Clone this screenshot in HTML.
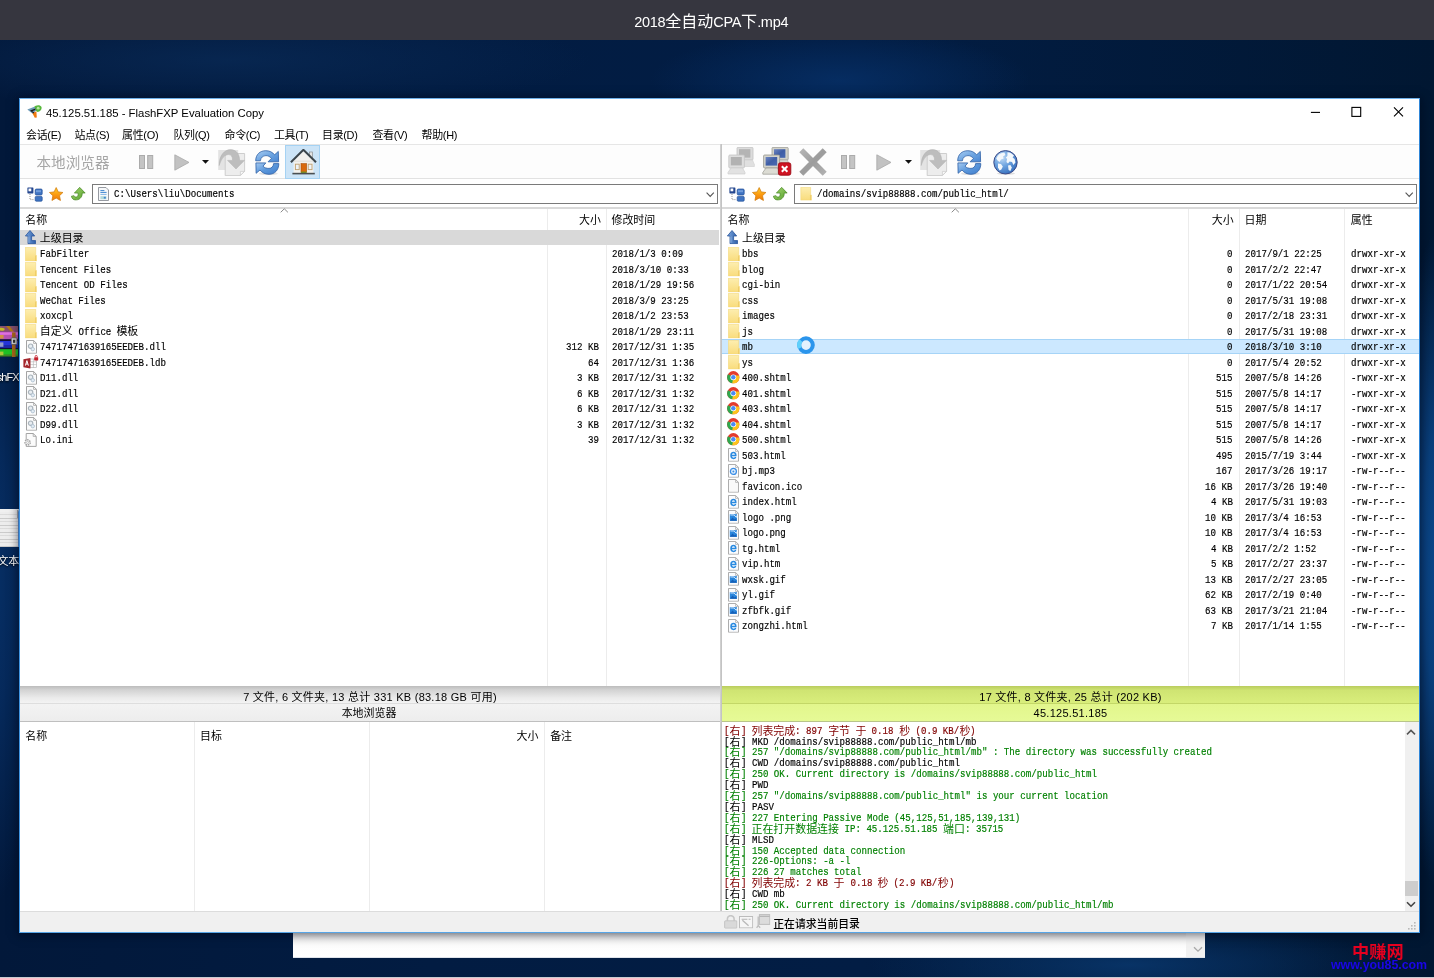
<!DOCTYPE html>
<html lang="zh-CN"><head><meta charset="utf-8"><title>FlashFXP</title>
<style>
html,body{margin:0;padding:0}
body{will-change:transform;width:1434px;height:978px;overflow:hidden;position:relative;background:#03204a;font-family:"Liberation Sans","Noto Sans CJK SC",sans-serif;font-size:11px;color:#000}
div,span,svg{position:absolute;box-sizing:border-box}
span.c,span.n{position:static}
.i{overflow:visible}
#desk{left:0;top:40px;width:1434px;height:938px;background:
 radial-gradient(ellipse 46px 330px at 1440px 520px,#0b4a8e 0%,rgba(10,66,130,.9) 40%,rgba(6,45,96,0) 100%),
 radial-gradient(ellipse 60px 330px at -14px 540px,#07326a 0%,rgba(6,44,96,.85) 45%,rgba(4,34,76,0) 100%),
 radial-gradient(ellipse 360px 50px at 230px 20px,rgba(9,42,86,.75) 0%,rgba(6,36,76,0) 100%),
 radial-gradient(ellipse 190px 50px at 840px 40px,rgba(6,46,100,.9) 0%,rgba(4,36,80,0) 100%),
 radial-gradient(ellipse 260px 44px at 1130px 925px,rgba(8,52,104,.95) 0%,rgba(4,36,80,0) 100%),
 linear-gradient(90deg,#02183a 0%,#021c42 30%,#021d44 60%,#011732 100%)}
#top{left:0;top:0;width:1434px;height:40px;background:#36363f;color:#fff;font-size:16px;line-height:40px;white-space:nowrap;padding-left:634.2px;padding-top:1.5px}
#top span{position:static;font-size:14.5px;letter-spacing:-.3px}
#win{left:19px;top:98px;width:1400.5px;height:834.5px;background:#fff;border:1px solid #3a96dd;border-color:#6fb1ea #2f86d8 #57a5e6 #3f95e2;box-shadow:0 1px 9px 1px rgba(0,5,20,.55)}
.t{white-space:nowrap;line-height:16px;height:16px}
.m,.l{font-family:"Liberation Mono","Noto Sans CJK SC",monospace;font-size:11.5px;white-space:pre;line-height:15.5px;height:15.5px;transform:scaleX(.7935);transform-origin:0 0;-webkit-text-stroke:.2px currentColor}
.mc,.lc{font-family:"Liberation Mono","Noto Sans CJK SC",monospace;font-size:10.95px;white-space:pre;line-height:15.5px;height:15.5px}
.mc,.lc{margin-top:1.1px}
.l{line-height:10.9px;height:10.9px}.lc{line-height:10.9px;height:10.9px}
.h{font-size:10.95px;white-space:nowrap;line-height:16px;height:16px}
.k{color:#000}.g{color:#008000}.d{color:#800000}
.vl{width:1px;background:#ececec}
.st{font-size:11px;letter-spacing:.25px;white-space:nowrap;text-align:center;line-height:16px;height:16px}
</style></head><body>

<svg width="0" height="0" style="position:absolute;left:0;top:0"><defs>
<linearGradient id="gB" x1="0" y1="0" x2="1" y2="1"><stop offset="0" stop-color="#a9cdf2"/><stop offset=".55" stop-color="#6aa2e0"/><stop offset="1" stop-color="#4a86d2"/></linearGradient><linearGradient id="gB2" x1="0" y1="0" x2="1" y2="1"><stop offset="0" stop-color="#a4c9f0"/><stop offset=".5" stop-color="#5c98dc"/><stop offset="1" stop-color="#3f7ccb"/></linearGradient>
<linearGradient id="gS" x1="0" y1="0" x2="0" y2="1"><stop offset="0" stop-color="#ffcf2a"/><stop offset=".55" stop-color="#fb9a10"/><stop offset="1" stop-color="#ee7a08"/></linearGradient>
<linearGradient id="gG" x1="0" y1="0" x2="1" y2="1"><stop offset="0" stop-color="#a6da74"/><stop offset="1" stop-color="#569e2c"/></linearGradient>
<linearGradient id="gF" x1="0" y1="0" x2="0" y2="1"><stop offset="0" stop-color="#fdeeb0"/><stop offset="1" stop-color="#f9dc7c"/></linearGradient>
<linearGradient id="gX" gradientUnits="userSpaceOnUse" x1="0" y1="0" x2="28" y2="28"><stop offset="0" stop-color="#b9b9b9"/><stop offset=".5" stop-color="#9c9c9c"/><stop offset="1" stop-color="#b4b4b4"/></linearGradient>
<linearGradient id="gSc" x1="0" y1="0" x2="1" y2="1"><stop offset="0" stop-color="#6f86c0"/><stop offset=".5" stop-color="#3f5ea6"/><stop offset="1" stop-color="#4a6ab2"/></linearGradient>
<radialGradient id="gGl" cx=".35" cy=".3" r=".8"><stop offset="0" stop-color="#c4ddf6"/><stop offset=".45" stop-color="#6ea4e0"/><stop offset="1" stop-color="#2f68b8"/></radialGradient>
<linearGradient id="gU" x1="0" y1="0" x2="1" y2="0"><stop offset="0" stop-color="#7aa6de"/><stop offset="1" stop-color="#2f5fa8"/></linearGradient>

<symbol id="app" viewBox="0 0 15 13"><path d="M7 2.2C8.5 .2 12.5 -.4 14.2 1.6 15.6 3.6 13.6 6.6 10.6 7L8 5.2Z" fill="#58b83c"/><path d="M.3 4.6L7.4 1.8 9.2 5.4 5.6 8.8Z" fill="#6f9cb8"/><path d="M5.4 8.2L9.4 6.2 9.8 12.6 7.8 12.8Z" fill="#f07a10"/><path d="M3 5.6L8.6 3.4 8.2 5 5.2 6.2 7.4 7.4 6.6 8.6Z" fill="#1a1a1a"/><circle cx="11.2" cy="3.2" r="1.4" fill="#b8e8a0"/></symbol>

<symbol id="xfer" viewBox="0 0 28 27"><rect x=".2" y="1" width="20" height="20" fill="#e3e3e3"/><path d="M7.2 4.5H26.6V22.4L22.4 26.6H7.2Z" fill="#ededed" stroke="#c9c9c9" stroke-width=".9"/><path d="M26.4 22.4H22.4V26.4Z" fill="#fafafa" stroke="#c9c9c9" stroke-width=".7"/><path d="M1.2 16.5C1 6 7 .6 12.4 .6 18.4 .6 21.6 5.4 21.6 11.4H26.4L18 20 9.6 11.4H14.6C14.6 7.6 13.2 5.6 10.6 5.6 6.6 5.6 3.4 9.4 1.2 16.5Z" fill="#bdbdbd" stroke="#b0b0b0" stroke-width=".5"/></symbol>

<symbol id="refr" viewBox="0 0 25 25"><ellipse cx="13.4" cy="23.6" rx="9.4" ry="1.7" fill="#000" opacity=".1"/><path d="M.7 10.8C.7 4.5 5 .7 10.8 .7 14.5 .7 17.5 2.2 19.6 4.8L23.3 1.4 23.6 11.8H13.1L16.4 8.4C15 6.6 13 5.6 11 5.6 8 5.6 5.6 7.6 5.4 10.8Z" fill="url(#gB)" stroke="#2d5fa6" stroke-width=".8" stroke-linejoin="round"/><path d="M23.8 13.6C23.8 20 19.8 24.3 14 24.3 10.2 24.3 7.2 22.8 5 20L1.1 23.3 .9 12.9H10.8L8 16.2C9.4 17.8 11.6 18.4 14 18.4 16.6 18.4 18.4 16.6 18.6 13.6Z" fill="url(#gB2)" stroke="#2d5fa6" stroke-width=".8" stroke-linejoin="round"/></symbol>

<symbol id="home" viewBox="0 0 27 26"><rect x="19.6" y="3" width="3" height="7" fill="#e4e4e4" stroke="#8a8f92" stroke-width=".7"/><path d="M3.6 12L13.4 2.2 23.4 12V24H3.6Z" fill="#f2f1ee"/><path d="M.9 13.2L13.4 .8 26 13.2" fill="none" stroke="#3c454b" stroke-width="2"/><rect x="3.6" y="11.6" width="19.8" height="1.2" fill="#d8d6d0" opacity=".6"/><rect x="11" y="14.6" width="5.6" height="8.8" fill="#d9690e" stroke="#a8500a" stroke-width=".6"/><rect x="5.4" y="15.2" width="3.8" height="5.4" fill="#eef3f8" stroke="#bfa070" stroke-width=".9"/><rect x="18.2" y="15.2" width="3.8" height="5.4" fill="#eef3f8" stroke="#bfa070" stroke-width=".9"/><rect x="11" y="22.6" width="5.6" height="1.2" fill="#6a9a20"/><rect x="2.4" y="23.8" width="22.4" height="1.6" fill="#4a4f52"/></symbol>

<symbol id="pcg" viewBox="0 0 28 28"><rect x="10" y=".4" width="16" height="12.6" rx="1" fill="#dcdcdc" stroke="#c2c2c2" stroke-width=".8"/><rect x="12" y="2.2" width="11.4" height="8.4" fill="#b4b4b4"/><path d="M17 13H25.5L27.4 17.5V19.5H17Z" fill="#e0e0e0" stroke="#cfcfcf" stroke-width=".6"/><rect x="1.8" y="8" width="15.6" height="13" rx="1" fill="#dedede" stroke="#c4c4c4" stroke-width=".8"/><rect x="3.8" y="10" width="11" height="8.4" fill="#b2b2b2"/><path d="M4 21H15.5L18 25.5V27H1V25.5Z" fill="#e2e2e2" stroke="#cdcdcd" stroke-width=".7"/></symbol>

<symbol id="pcb" viewBox="0 0 30 29"><rect x="10" y=".4" width="16.2" height="12.6" rx="1" fill="#d2d2ca" stroke="#9c9c94" stroke-width=".8"/><rect x="12" y="2.2" width="11.4" height="8.6" fill="url(#gSc)"/><path d="M17 13H25.5L27 17V19H17Z" fill="#d8d8d0" stroke="#aaa" stroke-width=".6"/><rect x="1.6" y="8" width="16" height="13" rx="1" fill="#d4d4cc" stroke="#96968e" stroke-width=".8"/><rect x="3.6" y="10" width="11.6" height="8.6" fill="url(#gSc)"/><path d="M4 21H15.5L18 25.5V27.2H.8V25.5Z" fill="#dcdcd4" stroke="#9a9a92" stroke-width=".7"/><rect x="16.4" y="15.8" width="12.4" height="12.4" rx="2" fill="#cf1322" stroke="#9c0a14" stroke-width=".9"/><path d="M19.8 19.2L25.4 24.8M25.4 19.2L19.8 24.8" stroke="#fff" stroke-width="2"/></symbol>

<symbol id="bigx" viewBox="0 0 28 28"><path d="M2.3 2.3L25.7 25.7M25.7 2.3L2.3 25.7" stroke="url(#gX)" stroke-width="5.7" fill="none"/></symbol>

<symbol id="globe" viewBox="0 0 25 25"><ellipse cx="13" cy="23.4" rx="9" ry="1.4" fill="#000" opacity=".12"/><circle cx="12.5" cy="12.3" r="11.7" fill="url(#gGl)" stroke="#3c4a86" stroke-width="1"/><path d="M5 5.5C7 3.5 9.5 2.6 11.4 2.6L12.4 5 10 6.4 10.6 8.6 8 9.4 6.6 12 4.6 10.4 3.2 8.4Z" fill="#f4f8fc"/><path d="M14.4 2.2C17 2.4 19.6 3.8 21 5.6L19.6 7.4 21.6 9 22.4 12.6 20.4 15 19 12 16.6 11.4 15 13.6 13.4 12 14 9 12.8 7.4 14.4 6Z" fill="#f4f8fc"/><path d="M5 13.4L8 14 9.8 16.4 8.4 19.6 6.6 20.4 5 17.6Z" fill="#f4f8fc"/><path d="M15 15.6L17.4 15 18.8 17.4 17.4 21 15.6 20Z" fill="#eef4fa"/></symbol>

<symbol id="tree" viewBox="0 0 16 15"><rect x=".4" y=".4" width="6" height="6" rx=".6" fill="#24468e"/><rect x="1.5" y="1.5" width="2.8" height="2.8" fill="#fff"/><path d="M3 7V12.6H7" fill="none" stroke="#777" stroke-width=".8" stroke-dasharray="1 1"/><rect x="8.2" y="2" width="7" height="6" rx="1.2" fill="#3f74c2" stroke="#234f98" stroke-width=".7"/><rect x="8.2" y="9.4" width="7" height="4.8" rx="1" fill="#3f74c2" stroke="#234f98" stroke-width=".7"/><path d="M9 3.2H14V5.2H9Z" fill="#7fa8e2" opacity=".8"/></symbol>

<symbol id="star" viewBox="0 0 15 15"><path d="M7.5 .6L9.7 5.2 14.6 5.8 11 9.2 12 14.2 7.5 11.7 3 14.2 4 9.2 .4 5.8 5.3 5.2Z" fill="url(#gS)" stroke="#d27a0a" stroke-width=".8" stroke-linejoin="round"/></symbol>

<symbol id="garr" viewBox="0 0 16 15"><path d="M9.4 .4L15.4 6.6H12.2C12.4 11.4 8.8 14.4 4.6 14.2 2.4 14 .8 12.4 .4 10L3.2 9.4C3.8 10.6 4.8 11 6 10.8 7.4 10.4 8 8.8 7.6 6.6H3.6Z" fill="url(#gG)" stroke="#3f7e1c" stroke-width=".7" stroke-linejoin="round"/></symbol>

<symbol id="doc" viewBox="0 0 11 14"><path d="M.5 .5H8L10.5 3V13.5H.5Z" fill="#f6f8fa" stroke="#8a8f96" stroke-width=".9"/><path d="M2.4 3.6H6.4M2.4 5.4H8.6" stroke="#3f86d0" stroke-width="1"/><path d="M2.4 7.4H8.6" stroke="#86b6e4" stroke-width="1"/><rect x="2.4" y="9.2" width="6" height="3" fill="#9cc" opacity=".7"/><rect x="5.8" y="9.8" width="2" height="1.8" fill="#3f86d0"/></symbol>

<symbol id="fold" viewBox="0 0 12 14.4"><path d="M.3 .3H10.7V8.6H11.7V14.1H.3Z" fill="url(#gF)" stroke="#f3d678" stroke-width=".6"/><path d="M10.5 8.6V14" stroke="#e9c45c" stroke-width=".7"/></symbol>

<symbol id="up" viewBox="0 0 11 14.2"><path d="M5 .5L9.7 6H6.6V10.6H10.6V13.7H3V6H.4Z" fill="url(#gU)" stroke="#2a569c" stroke-width=".8" stroke-linejoin="round"/><path d="M3.9 6.4V12.8" stroke="#a9c6ec" stroke-width=".7"/></symbol>

<symbol id="dll" viewBox="0 0 11 13.8"><path d="M.5 .5H7.6L10.5 3.4V13.3H.5Z" fill="#fbfbfb" stroke="#9a9a9a" stroke-width=".9"/><path d="M7.6 .5V3.4H10.5" fill="none" stroke="#9a9a9a" stroke-width=".7"/><circle cx="4.6" cy="6.2" r="2.2" fill="#e9eef2" stroke="#aab4bc" stroke-width="1.2"/><circle cx="6.8" cy="9.2" r="1.7" fill="#e3ecf4" stroke="#b4c4d2" stroke-width="1"/></symbol>

<symbol id="ini" viewBox="0 0 14 14"><path d="M3.2 .5H10.2L13.2 3.4V13.4H3.2Z" fill="#fbfbfb" stroke="#9a9a9a" stroke-width=".9"/><path d="M10.2 .5V3.4H13.2" fill="none" stroke="#9a9a9a" stroke-width=".7"/><circle cx="4.6" cy="9.4" r="2.6" fill="#f2f2f2" stroke="#a4a4a4" stroke-width="1.5" stroke-dasharray="1.4 .9"/><circle cx="4.6" cy="9.4" r="1" fill="#fff" stroke="#a8a8a8" stroke-width=".6"/></symbol>

<symbol id="ldb" viewBox="0 0 16 14"><rect x="7" y="4" width="6.6" height="8.6" fill="#fff" stroke="#b4b4b4" stroke-width=".7"/><path d="M7 6.8H13.6M7 9.6H13.6M10.4 4V12.6" stroke="#b4b4b4" stroke-width=".6"/><path d="M.4 4.2L7.4 3V13.4L.4 12.2Z" fill="#a4262c"/><path d="M2.4 10.6L3.9 5.6L5.4 10.6M2.9 9H4.9" fill="none" stroke="#fff" stroke-width="1"/><rect x="11.2" y="2.2" width="4" height="3.2" rx=".4" fill="#c4202c"/><path d="M12.2 2.2V1.4A1 1 0 0 1 14.2 1.4V2.2" fill="none" stroke="#c4202c" stroke-width=".8"/></symbol>

<symbol id="chrome" viewBox="0 0 12.6 12.6"><circle cx="6.3" cy="6.3" r="6.2" fill="#e33b2e"/><path d="M6.3 6.3L1 3.2A6.2 6.2 0 0 0 5.2 12.4L8.6 7.6Z" fill="#2da94f"/><path d="M6.3 6.3L5.2 12.4A6.2 6.2 0 0 0 12.2 4.4H6.3Z" fill="#fcc31e"/><circle cx="6.3" cy="6.3" r="2.9" fill="#fff"/><circle cx="6.3" cy="6.3" r="2.2" fill="#4a8af4"/></symbol>

<symbol id="blank" viewBox="0 0 11 13.8"><path d="M.5 .5H7.6L10.5 3.4V13.3H.5Z" fill="#f9f9f9" stroke="#a4a4a4" stroke-width=".9"/><path d="M7.6 .5V3.4H10.5" fill="none" stroke="#a4a4a4" stroke-width=".7"/></symbol>

<symbol id="ie" viewBox="0 0 11 13.8"><path d="M.5 .5H7.6L10.5 3.4V13.3H.5Z" fill="#fbfcfe" stroke="#a4a4a4" stroke-width=".9"/><path d="M7.6 .5V3.4H10.5" fill="none" stroke="#a4a4a4" stroke-width=".7"/><path d="M3.4 7.6H7.8C7.8 5.6 6.8 4.6 5.5 4.6 4 4.6 3 5.8 3 7.6 3 9.4 4 10.4 5.5 10.4 6.6 10.4 7.4 9.8 7.7 9" fill="none" stroke="#2a8ae0" stroke-width="1.5"/></symbol>

<symbol id="mp3" viewBox="0 0 11 13.8"><path d="M.5 .5H7.6L10.5 3.4V13.3H.5Z" fill="#fbfcfe" stroke="#a4a4a4" stroke-width=".9"/><path d="M7.6 .5V3.4H10.5" fill="none" stroke="#a4a4a4" stroke-width=".7"/><circle cx="5.4" cy="7.4" r="3" fill="#e8f2fc" stroke="#3a8ee6" stroke-width="1.3"/><circle cx="5.4" cy="7.4" r="1" fill="#3a8ee6"/></symbol>

<symbol id="img" viewBox="0 0 11 13.8"><path d="M.5 .5H7.6L10.5 3.4V13.3H.5Z" fill="#fbfcfe" stroke="#a4a4a4" stroke-width=".9"/><path d="M7.6 .5V3.4H10.5" fill="none" stroke="#a4a4a4" stroke-width=".7"/><rect x="1.8" y="4.2" width="7.2" height="6.6" fill="#2a86dc"/><path d="M2.4 5H6L8.4 7.4V5.6" fill="none" stroke="#d8ecff" stroke-width=".9"/><path d="M1.8 10.8L4.6 7.6 6.4 9.4 7.4 8.6 9 10.8Z" fill="#1660b8"/></symbol>

<symbol id="lock" viewBox="0 0 13.5 13.8"><path d="M3.4 6V4A3.3 3.3 0 0 1 10.1 4V6" fill="none" stroke="#c6c6c6" stroke-width="1.6"/><rect x=".6" y="5.8" width="12.3" height="7.4" rx=".8" fill="#d9d9d9" stroke="#c2c2c2" stroke-width=".9"/></symbol>
<symbol id="sb2" viewBox="0 0 14.2 12.4"><rect x=".5" y=".5" width="13.2" height="11.4" fill="#f6f6f6" stroke="#bcbcbc" stroke-width="1"/><path d="M2.6 3.2H8.4M9.6 3.2H11.6" stroke="#b4b4b4" stroke-width="1.1"/><path d="M3.4 4.2L9.6 9.8" stroke="#b8b8b8" stroke-width="1.3"/></symbol>
<symbol id="sb3" viewBox="0 0 14.4 14.4"><rect x="3.4" y=".6" width="10.4" height="9.8" fill="#dcdcdc" stroke="#bdbdbd" stroke-width="1"/><path d="M3.4 2.4H13.8" stroke="#b6b6b6" stroke-width="1.2"/><path d="M2.2 2.6V12.2M.6 13.8L2.2 11.6 4.2 13.8" fill="none" stroke="#bdbdbd" stroke-width="1.3"/></symbol>
</defs></svg>

<div id="desk"></div>
<svg class="i" style="left:0;top:326px" width="18" height="31" viewBox="0 0 18 31"><rect width="18" height="31" fill="#141038"/><rect width="18" height="5.8" fill="#86506e"/><ellipse cx="1.6" cy="3.2" rx="3" ry="1.5" fill="#c4bc24"/><path d="M6 0H9.4L14.6 6.4H11.4Z" fill="#b07818"/><rect y="5.6" width="18" height="7.6" fill="#b452b4"/><rect y="6.4" width="18" height="2.4" fill="#e070e0"/><rect y="9" width="3.6" height="3.6" fill="#d09244"/><rect y="15" width="18" height="6.6" fill="#2434d8"/><rect y="19" width="18" height="2.6" fill="#1c28a8"/><rect y="16.4" width="3.4" height="4.4" fill="#8f98c8"/><rect y="23.2" width="18" height="7" fill="#1fc024"/><rect y="28.4" width="18" height="2" fill="#3c8a24"/><rect y="25.6" width="3.4" height="3.6" fill="#a8c838"/><rect x="12" y="6.4" width="3.6" height="24.6" fill="#a8681a"/><rect x="11.2" y="11.8" width="5.8" height="6.8" rx=".8" fill="#cfcfcf" stroke="#4a4a4a" stroke-width=".7"/><rect x="13" y="13.8" width="2.2" height="3" fill="#333"/></svg>
<div class="t" style="right:1409px;top:368.6px;color:#fff;font-size:10.95px;letter-spacing:-.9px;text-shadow:0 1px 2px #000">FlashFXP</div>
<div style="left:0;top:508.8px;width:19px;height:38.4px;background:repeating-linear-gradient(180deg,#ededed 0,#ededed 2.2px,#c4c4c4 2.9px,#ededed 3.5px);border-top:3px solid #f0f0f0;border-right:1.4px solid #5a98e6"><div style="left:16.6px;top:-2px;width:1px;height:8px;background:#aaa"></div></div>
<div class="t" style="left:-2.6px;top:553.2px;color:#fff;font-size:10.95px;text-shadow:0 1px 2px #000">文本文档</div>
<div style="left:0;top:976.6px;width:1434px;height:1.4px;background:#c9ccd2"></div>
<div style="left:293px;top:925px;width:912px;height:32.5px;background:linear-gradient(180deg,#e4e4e4 0,#e4e4e4 8px,#f1f1f1 13px,#fdfdfd 22px,#fff 100%);border-bottom:1px solid #dfe3ea"><div style="left:893px;top:8px;width:19px;height:23.5px;background:#f1f1f1"></div><svg class="i" style="left:900px;top:21px" width="10" height="7"><path d="M1 1.2 L5 5.2 L9 1.2" fill="none" stroke="#a8a8a8" stroke-width="1.3"/></svg></div>
<div id="top"><span>2018</span>全自动<span>CPA</span>下<span>.mp4</span></div>
<div id="win"></div>
<svg class="i" style="left:27px;top:105px" width="15" height="13" ><use href="#app"/></svg>
<div class="t" style="left:46px;top:104.5px;font-size:11.35px">45.125.51.185 - FlashFXP Evaluation Copy</div>
<svg class="i" style="left:1300px;top:100px" width="115" height="24"><path d="M10.9 12.4H20" stroke="#000" stroke-width="1.1"/><rect x="51.9" y="7.4" width="8.8" height="9" fill="none" stroke="#000" stroke-width="1.1"/><path d="M94 7.3l9 9.1M103 7.3l-9 9.1" stroke="#000" stroke-width="1.1"/></svg>
<div class="h" style="left:26.1px;top:126.5px;letter-spacing:-.3px">会话(E)</div>
<div class="h" style="left:74.4px;top:126.5px;letter-spacing:-.3px">站点(S)</div>
<div class="h" style="left:122.1px;top:126.5px;letter-spacing:-.3px">属性(O)</div>
<div class="h" style="left:173.4px;top:126.5px;letter-spacing:-.3px">队列(Q)</div>
<div class="h" style="left:224.6px;top:126.5px;letter-spacing:-.3px">命令(C)</div>
<div class="h" style="left:273.9px;top:126.5px;letter-spacing:-.3px">工具(T)</div>
<div class="h" style="left:322px;top:126.5px;letter-spacing:-.3px">目录(D)</div>
<div class="h" style="left:372.4px;top:126.5px;letter-spacing:-.3px">查看(V)</div>
<div class="h" style="left:421.6px;top:126.5px;letter-spacing:-.3px">帮助(H)</div>
<div style="left:20px;top:143.5px;width:1399px;height:35.5px;border-top:1px solid #e6e6e6;border-bottom:1px solid #e2e2e2;background:#fdfdfd"></div>
<div class="t" style="left:36.5px;top:152.5px;font-size:14.6px;color:#a6a6a6;line-height:20px;height:20px">本地浏览器</div>
<svg class="i" style="left:138.8px;top:155.3px" width="15" height="14"><rect x=".5" y=".5" width="5" height="13" fill="#c4c4c4" stroke="#ababab"/><rect x="8.7" y=".5" width="5" height="13" fill="#c4c4c4" stroke="#ababab"/></svg>
<svg class="i" style="left:173.5px;top:153.5px" width="16" height="17"><path d="M.8 .8 L15 8.4 L.8 16.2Z" fill="#c2c2c2" stroke="#aaa" stroke-width=".8"/></svg>
<svg class="i" style="left:202.3px;top:159.8px" width="8" height="4"><path d="M0 0H7L3.5 3.8Z" fill="#111"/></svg>
<svg class="i" style="left:218px;top:149px" width="28" height="27" ><use href="#xfer"/></svg>
<svg class="i" style="left:255px;top:149.5px" width="25" height="25" ><use href="#refr"/></svg>
<div style="left:285px;top:145px;width:35.2px;height:33.5px;background:#cce4f7;border:1px solid #a5d2f3"></div>
<svg class="i" style="left:289.5px;top:149px" width="27" height="26" ><use href="#home"/></svg>
<svg class="i" style="left:727px;top:147px" width="28" height="28" ><use href="#pcg"/></svg>
<svg class="i" style="left:761.5px;top:147px" width="30" height="29" ><use href="#pcb"/></svg>
<svg class="i" style="left:798.5px;top:147.5px" width="28" height="28" ><use href="#bigx"/></svg>
<svg class="i" style="left:841px;top:155.3px" width="15" height="14"><rect x=".5" y=".5" width="5" height="13" fill="#c4c4c4" stroke="#ababab"/><rect x="8.7" y=".5" width="5" height="13" fill="#c4c4c4" stroke="#ababab"/></svg>
<svg class="i" style="left:875.5px;top:153.5px" width="16" height="17"><path d="M.8 .8 L15 8.4 L.8 16.2Z" fill="#c2c2c2" stroke="#aaa" stroke-width=".8"/></svg>
<svg class="i" style="left:904.6px;top:159.8px" width="8" height="4"><path d="M0 0H7L3.5 3.8Z" fill="#111"/></svg>
<svg class="i" style="left:920px;top:149px" width="28" height="27" ><use href="#xfer"/></svg>
<svg class="i" style="left:957px;top:149.5px" width="25" height="25" ><use href="#refr"/></svg>
<svg class="i" style="left:992.5px;top:149.8px" width="25" height="25" ><use href="#globe"/></svg>
<svg class="i" style="left:26.5px;top:186.5px" width="16" height="15" ><use href="#tree"/></svg>
<svg class="i" style="left:49px;top:186.6px" width="14.4" height="14.2" ><use href="#star"/></svg>
<svg class="i" style="left:70.8px;top:186.8px" width="14.8" height="13.8" ><use href="#garr"/></svg>
<svg class="i" style="left:729.0px;top:186.5px" width="16" height="15" ><use href="#tree"/></svg>
<svg class="i" style="left:751.5px;top:186.6px" width="14.4" height="14.2" ><use href="#star"/></svg>
<svg class="i" style="left:773.3px;top:186.8px" width="14.8" height="13.8" ><use href="#garr"/></svg>
<div style="left:92px;top:184px;width:625.5px;height:19.8px;border:1px solid #7a7a7a;background:#fff"></div>
<div style="left:794.3px;top:184px;width:622.5px;height:19.8px;border:1px solid #7a7a7a;background:#fff"></div>
<svg class="i" style="left:98px;top:187.3px" width="11" height="14" ><use href="#doc"/></svg>
<svg class="i" style="left:800.2px;top:187.2px" width="12.4" height="13.6" ><use href="#fold"/></svg>
<div class="m " style="left:114.00px;top:185.90px">C:\Users\liu\Documents</div>
<div class="m " style="left:816.60px;top:185.90px">/domains/svip88888.com/public_html/</div>
<svg class="i" style="left:705.6px;top:192px" width="9" height="6"><path d="M.6 .7 L4.2 4.4 L7.8 .7" fill="none" stroke="#555" stroke-width="1.1"/></svg>
<svg class="i" style="left:1405.3px;top:192px" width="9" height="6"><path d="M.6 .7 L4.2 4.4 L7.8 .7" fill="none" stroke="#555" stroke-width="1.1"/></svg>
<div style="left:20px;top:206.6px;width:1399px;height:2.4px;background:#d9d9d9"></div>
<div style="left:719.8px;top:143.5px;width:2.2px;height:768px;background:linear-gradient(90deg,#d6d6d6,#bdbdbd)"></div>
<div class="vl" style="left:547.4px;top:209px;height:477px"></div>
<div class="vl" style="left:605.5px;top:209px;height:477px"></div>
<div class="vl" style="left:1188.2px;top:209px;height:477px"></div>
<div class="vl" style="left:1239px;top:209px;height:477px"></div>
<div class="vl" style="left:1344.2px;top:209px;height:477px"></div>
<div class="h" style="left:25.3px;top:211.6px">名称</div><div class="h" style="left:579px;top:211.6px">大小</div><div class="h" style="left:611.5px;top:211.6px">修改时间</div>
<div class="h" style="left:727.6px;top:211.6px">名称</div><div class="h" style="left:1211.8px;top:211.6px">大小</div><div class="h" style="left:1244.5px;top:211.6px">日期</div><div class="h" style="left:1350.8px;top:211.6px">属性</div>
<svg class="i" style="left:279.8px;top:207.8px" width="9" height="5"><path d="M.7 4.3 L4.3 .8 L7.9 4.3" fill="none" stroke="#8a8a8a" stroke-width="1"/></svg>
<svg class="i" style="left:951px;top:207.8px" width="9" height="5"><path d="M.7 4.3 L4.3 .8 L7.9 4.3" fill="none" stroke="#8a8a8a" stroke-width="1"/></svg>
<div style="left:20px;top:230.2px;width:699.3px;height:15.3px;background:#d9d9d9"></div>
<svg class="i" style="left:25.2px;top:230.2px" width="11" height="14.2" ><use href="#up"/></svg>
<div class="mc " style="left:39.80px;top:230.60px">上级目录</div>
<svg class="i" style="left:25.4px;top:246.6px" width="12" height="14.4" ><use href="#fold"/></svg>
<div class="m " style="left:39.80px;top:246.10px">FabFilter</div>
<div class="m " style="left:611.60px;top:246.10px">2018/1/3 0:09</div>
<svg class="i" style="left:25.4px;top:262.1px" width="12" height="14.4" ><use href="#fold"/></svg>
<div class="m " style="left:39.80px;top:261.60px">Tencent Files</div>
<div class="m " style="left:611.60px;top:261.60px">2018/3/10 0:33</div>
<svg class="i" style="left:25.4px;top:277.6px" width="12" height="14.4" ><use href="#fold"/></svg>
<div class="m " style="left:39.80px;top:277.10px">Tencent OD Files</div>
<div class="m " style="left:611.60px;top:277.10px">2018/1/29 19:56</div>
<svg class="i" style="left:25.4px;top:293.1px" width="12" height="14.4" ><use href="#fold"/></svg>
<div class="m " style="left:39.80px;top:292.60px">WeChat Files</div>
<div class="m " style="left:611.60px;top:292.60px">2018/3/9 23:25</div>
<svg class="i" style="left:25.4px;top:308.6px" width="12" height="14.4" ><use href="#fold"/></svg>
<div class="m " style="left:39.80px;top:308.10px">xoxcpl</div>
<div class="m " style="left:611.60px;top:308.10px">2018/1/2 23:53</div>
<svg class="i" style="left:25.4px;top:324.1px" width="12" height="14.4" ><use href="#fold"/></svg>
<div class="mc " style="left:39.80px;top:323.60px">自定义</div><div class="m " style="left:72.65px;top:323.60px"> Office </div><div class="mc " style="left:116.45px;top:323.60px">模板</div>
<div class="m " style="left:611.60px;top:323.60px">2018/1/29 23:11</div>
<svg class="i" style="left:25.599999999999998px;top:339.8px" width="11" height="13.8" ><use href="#dll"/></svg>
<div class="m " style="left:39.80px;top:339.10px">74717471639165EEDEB.dll</div>
<div class="m " style="left:565.75px;top:339.10px">312 KB</div>
<div class="m " style="left:611.60px;top:339.10px">2017/12/31 1:35</div>
<svg class="i" style="left:23.0px;top:354.9px" width="16" height="14" ><use href="#ldb"/></svg>
<div class="m " style="left:39.80px;top:354.60px">74717471639165EEDEB.ldb</div>
<div class="m " style="left:587.65px;top:354.60px">64</div>
<div class="m " style="left:611.60px;top:354.60px">2017/12/31 1:36</div>
<svg class="i" style="left:25.599999999999998px;top:370.8px" width="11" height="13.8" ><use href="#dll"/></svg>
<div class="m " style="left:39.80px;top:370.10px">D11.dll</div>
<div class="m " style="left:576.70px;top:370.10px">3 KB</div>
<div class="m " style="left:611.60px;top:370.10px">2017/12/31 1:32</div>
<svg class="i" style="left:25.599999999999998px;top:386.3px" width="11" height="13.8" ><use href="#dll"/></svg>
<div class="m " style="left:39.80px;top:385.60px">D21.dll</div>
<div class="m " style="left:576.70px;top:385.60px">6 KB</div>
<div class="m " style="left:611.60px;top:385.60px">2017/12/31 1:32</div>
<svg class="i" style="left:25.599999999999998px;top:401.8px" width="11" height="13.8" ><use href="#dll"/></svg>
<div class="m " style="left:39.80px;top:401.10px">D22.dll</div>
<div class="m " style="left:576.70px;top:401.10px">6 KB</div>
<div class="m " style="left:611.60px;top:401.10px">2017/12/31 1:32</div>
<svg class="i" style="left:25.599999999999998px;top:417.3px" width="11" height="13.8" ><use href="#dll"/></svg>
<div class="m " style="left:39.80px;top:416.60px">D99.dll</div>
<div class="m " style="left:576.70px;top:416.60px">3 KB</div>
<div class="m " style="left:611.60px;top:416.60px">2017/12/31 1:32</div>
<svg class="i" style="left:23.0px;top:433.0px" width="14" height="14" ><use href="#ini"/></svg>
<div class="m " style="left:39.80px;top:432.10px">Lo.ini</div>
<div class="m " style="left:587.65px;top:432.10px">39</div>
<div class="m " style="left:611.60px;top:432.10px">2017/12/31 1:32</div>
<div style="left:722.3px;top:339.3px;width:1096.4px;width:696.4px;height:15.2px;background:#cce8ff;border:1px solid #a6d4f7;border-left:0;border-right:0"></div>
<svg class="i" style="left:727.4px;top:230.2px" width="11" height="14.2" ><use href="#up"/></svg>
<div class="mc " style="left:742.00px;top:230.60px">上级目录</div>
<svg class="i" style="left:727.6px;top:246.6px" width="12" height="14.4" ><use href="#fold"/></svg>
<div class="m " style="left:742.00px;top:246.10px">bbs</div>
<div class="m " style="left:1227.12px;top:246.10px">0</div>
<div class="m " style="left:1244.60px;top:246.10px">2017/9/1 22:25</div>
<div class="m " style="left:1351.30px;top:246.10px">drwxr-xr-x</div>
<svg class="i" style="left:727.6px;top:262.1px" width="12" height="14.4" ><use href="#fold"/></svg>
<div class="m " style="left:742.00px;top:261.60px">blog</div>
<div class="m " style="left:1227.12px;top:261.60px">0</div>
<div class="m " style="left:1244.60px;top:261.60px">2017/2/2 22:47</div>
<div class="m " style="left:1351.30px;top:261.60px">drwxr-xr-x</div>
<svg class="i" style="left:727.6px;top:277.6px" width="12" height="14.4" ><use href="#fold"/></svg>
<div class="m " style="left:742.00px;top:277.10px">cgi-bin</div>
<div class="m " style="left:1227.12px;top:277.10px">0</div>
<div class="m " style="left:1244.60px;top:277.10px">2017/1/22 20:54</div>
<div class="m " style="left:1351.30px;top:277.10px">drwxr-xr-x</div>
<svg class="i" style="left:727.6px;top:293.1px" width="12" height="14.4" ><use href="#fold"/></svg>
<div class="m " style="left:742.00px;top:292.60px">css</div>
<div class="m " style="left:1227.12px;top:292.60px">0</div>
<div class="m " style="left:1244.60px;top:292.60px">2017/5/31 19:08</div>
<div class="m " style="left:1351.30px;top:292.60px">drwxr-xr-x</div>
<svg class="i" style="left:727.6px;top:308.6px" width="12" height="14.4" ><use href="#fold"/></svg>
<div class="m " style="left:742.00px;top:308.10px">images</div>
<div class="m " style="left:1227.12px;top:308.10px">0</div>
<div class="m " style="left:1244.60px;top:308.10px">2017/2/18 23:31</div>
<div class="m " style="left:1351.30px;top:308.10px">drwxr-xr-x</div>
<svg class="i" style="left:727.6px;top:324.1px" width="12" height="14.4" ><use href="#fold"/></svg>
<div class="m " style="left:742.00px;top:323.60px">js</div>
<div class="m " style="left:1227.12px;top:323.60px">0</div>
<div class="m " style="left:1244.60px;top:323.60px">2017/5/31 19:08</div>
<div class="m " style="left:1351.30px;top:323.60px">drwxr-xr-x</div>
<svg class="i" style="left:727.6px;top:339.6px" width="12" height="14.4" ><use href="#fold"/></svg>
<div class="m " style="left:742.00px;top:339.10px">mb</div>
<div class="m " style="left:1227.12px;top:339.10px">0</div>
<div class="m " style="left:1244.60px;top:339.10px">2018/3/10 3:10</div>
<div class="m " style="left:1351.30px;top:339.10px">drwxr-xr-x</div>
<svg class="i" style="left:727.6px;top:355.1px" width="12" height="14.4" ><use href="#fold"/></svg>
<div class="m " style="left:742.00px;top:354.60px">ys</div>
<div class="m " style="left:1227.12px;top:354.60px">0</div>
<div class="m " style="left:1244.60px;top:354.60px">2017/5/4 20:52</div>
<div class="m " style="left:1351.30px;top:354.60px">drwxr-xr-x</div>
<svg class="i" style="left:727.1px;top:371.4px" width="12.6" height="12.6" ><use href="#chrome"/></svg>
<div class="m " style="left:742.00px;top:370.10px">400.shtml</div>
<div class="m " style="left:1216.17px;top:370.10px">515</div>
<div class="m " style="left:1244.60px;top:370.10px">2007/5/8 14:26</div>
<div class="m " style="left:1351.30px;top:370.10px">-rwxr-xr-x</div>
<svg class="i" style="left:727.1px;top:386.9px" width="12.6" height="12.6" ><use href="#chrome"/></svg>
<div class="m " style="left:742.00px;top:385.60px">401.shtml</div>
<div class="m " style="left:1216.17px;top:385.60px">515</div>
<div class="m " style="left:1244.60px;top:385.60px">2007/5/8 14:17</div>
<div class="m " style="left:1351.30px;top:385.60px">-rwxr-xr-x</div>
<svg class="i" style="left:727.1px;top:402.4px" width="12.6" height="12.6" ><use href="#chrome"/></svg>
<div class="m " style="left:742.00px;top:401.10px">403.shtml</div>
<div class="m " style="left:1216.17px;top:401.10px">515</div>
<div class="m " style="left:1244.60px;top:401.10px">2007/5/8 14:17</div>
<div class="m " style="left:1351.30px;top:401.10px">-rwxr-xr-x</div>
<svg class="i" style="left:727.1px;top:417.9px" width="12.6" height="12.6" ><use href="#chrome"/></svg>
<div class="m " style="left:742.00px;top:416.60px">404.shtml</div>
<div class="m " style="left:1216.17px;top:416.60px">515</div>
<div class="m " style="left:1244.60px;top:416.60px">2007/5/8 14:17</div>
<div class="m " style="left:1351.30px;top:416.60px">-rwxr-xr-x</div>
<svg class="i" style="left:727.1px;top:433.4px" width="12.6" height="12.6" ><use href="#chrome"/></svg>
<div class="m " style="left:742.00px;top:432.10px">500.shtml</div>
<div class="m " style="left:1216.17px;top:432.10px">515</div>
<div class="m " style="left:1244.60px;top:432.10px">2007/5/8 14:26</div>
<div class="m " style="left:1351.30px;top:432.10px">-rwxr-xr-x</div>
<svg class="i" style="left:728.0px;top:448.3px" width="11" height="13.8" ><use href="#ie"/></svg>
<div class="m " style="left:742.00px;top:447.60px">503.html</div>
<div class="m " style="left:1216.17px;top:447.60px">495</div>
<div class="m " style="left:1244.60px;top:447.60px">2015/7/19 3:44</div>
<div class="m " style="left:1351.30px;top:447.60px">-rwxr-xr-x</div>
<svg class="i" style="left:728.0px;top:463.8px" width="11" height="13.8" ><use href="#mp3"/></svg>
<div class="m " style="left:742.00px;top:463.10px">bj.mp3</div>
<div class="m " style="left:1216.17px;top:463.10px">167</div>
<div class="m " style="left:1244.60px;top:463.10px">2017/3/26 19:17</div>
<div class="m " style="left:1351.30px;top:463.10px">-rw-r--r--</div>
<svg class="i" style="left:728.0px;top:479.3px" width="11" height="13.8" ><use href="#blank"/></svg>
<div class="m " style="left:742.00px;top:478.60px">favicon.ico</div>
<div class="m " style="left:1205.22px;top:478.60px">16 KB</div>
<div class="m " style="left:1244.60px;top:478.60px">2017/3/26 19:40</div>
<div class="m " style="left:1351.30px;top:478.60px">-rw-r--r--</div>
<svg class="i" style="left:728.0px;top:494.8px" width="11" height="13.8" ><use href="#ie"/></svg>
<div class="m " style="left:742.00px;top:494.10px">index.html</div>
<div class="m " style="left:1210.70px;top:494.10px">4 KB</div>
<div class="m " style="left:1244.60px;top:494.10px">2017/5/31 19:03</div>
<div class="m " style="left:1351.30px;top:494.10px">-rw-r--r--</div>
<svg class="i" style="left:728.0px;top:510.3px" width="11" height="13.8" ><use href="#img"/></svg>
<div class="m " style="left:742.00px;top:509.60px">logo .png</div>
<div class="m " style="left:1205.22px;top:509.60px">10 KB</div>
<div class="m " style="left:1244.60px;top:509.60px">2017/3/4 16:53</div>
<div class="m " style="left:1351.30px;top:509.60px">-rw-r--r--</div>
<svg class="i" style="left:728.0px;top:525.8px" width="11" height="13.8" ><use href="#img"/></svg>
<div class="m " style="left:742.00px;top:525.10px">logo.png</div>
<div class="m " style="left:1205.22px;top:525.10px">10 KB</div>
<div class="m " style="left:1244.60px;top:525.10px">2017/3/4 16:53</div>
<div class="m " style="left:1351.30px;top:525.10px">-rw-r--r--</div>
<svg class="i" style="left:728.0px;top:541.3px" width="11" height="13.8" ><use href="#ie"/></svg>
<div class="m " style="left:742.00px;top:540.60px">tg.html</div>
<div class="m " style="left:1210.70px;top:540.60px">4 KB</div>
<div class="m " style="left:1244.60px;top:540.60px">2017/2/2 1:52</div>
<div class="m " style="left:1351.30px;top:540.60px">-rw-r--r--</div>
<svg class="i" style="left:728.0px;top:556.8px" width="11" height="13.8" ><use href="#ie"/></svg>
<div class="m " style="left:742.00px;top:556.10px">vip.htm</div>
<div class="m " style="left:1210.70px;top:556.10px">5 KB</div>
<div class="m " style="left:1244.60px;top:556.10px">2017/2/27 23:37</div>
<div class="m " style="left:1351.30px;top:556.10px">-rw-r--r--</div>
<svg class="i" style="left:728.0px;top:572.3px" width="11" height="13.8" ><use href="#img"/></svg>
<div class="m " style="left:742.00px;top:571.60px">wxsk.gif</div>
<div class="m " style="left:1205.22px;top:571.60px">13 KB</div>
<div class="m " style="left:1244.60px;top:571.60px">2017/2/27 23:05</div>
<div class="m " style="left:1351.30px;top:571.60px">-rw-r--r--</div>
<svg class="i" style="left:728.0px;top:587.8px" width="11" height="13.8" ><use href="#img"/></svg>
<div class="m " style="left:742.00px;top:587.10px">yl.gif</div>
<div class="m " style="left:1205.22px;top:587.10px">62 KB</div>
<div class="m " style="left:1244.60px;top:587.10px">2017/2/19 0:40</div>
<div class="m " style="left:1351.30px;top:587.10px">-rw-r--r--</div>
<svg class="i" style="left:728.0px;top:603.3px" width="11" height="13.8" ><use href="#img"/></svg>
<div class="m " style="left:742.00px;top:602.60px">zfbfk.gif</div>
<div class="m " style="left:1205.22px;top:602.60px">63 KB</div>
<div class="m " style="left:1244.60px;top:602.60px">2017/3/21 21:04</div>
<div class="m " style="left:1351.30px;top:602.60px">-rw-r--r--</div>
<svg class="i" style="left:728.0px;top:618.8px" width="11" height="13.8" ><use href="#ie"/></svg>
<div class="m " style="left:742.00px;top:618.10px">zongzhi.html</div>
<div class="m " style="left:1210.70px;top:618.10px">7 KB</div>
<div class="m " style="left:1244.60px;top:618.10px">2017/1/14 1:55</div>
<div class="m " style="left:1351.30px;top:618.10px">-rw-r--r--</div>
<svg class="i" style="left:796px;top:335px" width="20" height="20"><circle cx="10" cy="10.1" r="6.8" fill="#e3f1fd" stroke="#2b95ec" stroke-width="4"/><path d="M3.9 13.2A6.8 6.8 0 0 1 5 5.6" fill="none" stroke="#5fd0fb" stroke-width="4"/></svg>
<div style="left:20px;top:685.6px;width:699.8px;height:18.4px;background:linear-gradient(180deg,#bcbcbc 0,#d2d2d2 22%,#ebebeb 70%,#f3f3f3 100%);border-bottom:1px solid #dedede"></div>
<div style="left:20px;top:704px;width:699.8px;height:17.5px;background:linear-gradient(180deg,#f3f3f3,#ededed);border-bottom:1px solid #bfbfbf"></div>
<div style="left:722px;top:685.6px;width:696.5px;height:18.4px;background:linear-gradient(180deg,#b9cc5e 0,#cfe472 25%,#d9ee7c 100%);border-bottom:1px solid #c3d767"></div>
<div style="left:722px;top:704px;width:696.5px;height:17.5px;background:linear-gradient(180deg,#e2f68c,#e6fa96);border-bottom:1px solid #b8c58a"></div>
<div class="st" style="left:20px;width:700px;top:688.8px">7 文件, 6 文件夹, 13 总计 331 KB (83.18 GB 可用)</div>
<div class="st" style="left:20px;width:698px;top:704.6px;letter-spacing:0;font-size:10.95px">本地浏览器</div>
<div class="st" style="left:722px;width:697px;top:688.8px">17 文件, 8 文件夹, 25 总计 (202 KB)</div>
<div class="st" style="left:722px;width:697px;top:704.6px;letter-spacing:.28px">45.125.51.185</div>
<div class="vl" style="left:194.3px;top:722px;height:189px"></div>
<div class="vl" style="left:369.2px;top:722px;height:189px"></div>
<div class="vl" style="left:544px;top:722px;height:189px"></div>
<div class="h" style="left:25.3px;top:727.6px">名称</div><div class="h" style="left:200px;top:727.6px">目标</div><div class="h" style="left:516.5px;top:727.6px">大小</div><div class="h" style="left:550.2px;top:727.6px">备注</div>
<div class="l d" style="left:724.10px;top:725.60px">[</div><div class="lc d" style="left:729.58px;top:725.60px">右</div><div class="l d" style="left:740.53px;top:725.60px">] </div><div class="lc d" style="left:751.48px;top:725.60px">列表完成</div><div class="l d" style="left:795.28px;top:725.60px">: 897 </div><div class="lc d" style="left:828.13px;top:725.60px">字节</div><div class="l d" style="left:850.03px;top:725.60px"> </div><div class="lc d" style="left:855.50px;top:725.60px">于</div><div class="l d" style="left:866.45px;top:725.60px"> 0.18 </div><div class="lc d" style="left:899.30px;top:725.60px">秒</div><div class="l d" style="left:910.25px;top:725.60px"> (0.9 KB/</div><div class="lc d" style="left:959.53px;top:725.60px">秒</div><div class="l d" style="left:970.48px;top:725.60px">)</div>
<div class="l k" style="left:724.10px;top:736.50px">[</div><div class="lc k" style="left:729.58px;top:736.50px">右</div><div class="l k" style="left:740.53px;top:736.50px">] MKD /domains/svip88888.com/public_html/mb</div>
<div class="l g" style="left:724.10px;top:747.40px">[</div><div class="lc g" style="left:729.58px;top:747.40px">右</div><div class="l g" style="left:740.53px;top:747.40px">] 257 "/domains/svip88888.com/public_html/mb" : The directory was successfully created</div>
<div class="l k" style="left:724.10px;top:758.30px">[</div><div class="lc k" style="left:729.58px;top:758.30px">右</div><div class="l k" style="left:740.53px;top:758.30px">] CWD /domains/svip88888.com/public_html</div>
<div class="l g" style="left:724.10px;top:769.20px">[</div><div class="lc g" style="left:729.58px;top:769.20px">右</div><div class="l g" style="left:740.53px;top:769.20px">] 250 OK. Current directory is /domains/svip88888.com/public_html</div>
<div class="l k" style="left:724.10px;top:780.10px">[</div><div class="lc k" style="left:729.58px;top:780.10px">右</div><div class="l k" style="left:740.53px;top:780.10px">] PWD</div>
<div class="l g" style="left:724.10px;top:791.00px">[</div><div class="lc g" style="left:729.58px;top:791.00px">右</div><div class="l g" style="left:740.53px;top:791.00px">] 257 "/domains/svip88888.com/public_html" is your current location</div>
<div class="l k" style="left:724.10px;top:801.90px">[</div><div class="lc k" style="left:729.58px;top:801.90px">右</div><div class="l k" style="left:740.53px;top:801.90px">] PASV</div>
<div class="l g" style="left:724.10px;top:812.80px">[</div><div class="lc g" style="left:729.58px;top:812.80px">右</div><div class="l g" style="left:740.53px;top:812.80px">] 227 Entering Passive Mode (45,125,51,185,139,131)</div>
<div class="l g" style="left:724.10px;top:823.70px">[</div><div class="lc g" style="left:729.58px;top:823.70px">右</div><div class="l g" style="left:740.53px;top:823.70px">] </div><div class="lc g" style="left:751.48px;top:823.70px">正在打开数据连接</div><div class="l g" style="left:839.08px;top:823.70px"> IP: 45.125.51.185 </div><div class="lc g" style="left:943.10px;top:823.70px">端口</div><div class="l g" style="left:965.00px;top:823.70px">: 35715</div>
<div class="l k" style="left:724.10px;top:834.60px">[</div><div class="lc k" style="left:729.58px;top:834.60px">右</div><div class="l k" style="left:740.53px;top:834.60px">] MLSD</div>
<div class="l g" style="left:724.10px;top:845.50px">[</div><div class="lc g" style="left:729.58px;top:845.50px">右</div><div class="l g" style="left:740.53px;top:845.50px">] 150 Accepted data connection</div>
<div class="l g" style="left:724.10px;top:856.40px">[</div><div class="lc g" style="left:729.58px;top:856.40px">右</div><div class="l g" style="left:740.53px;top:856.40px">] 226-Options: -a -l</div>
<div class="l g" style="left:724.10px;top:867.30px">[</div><div class="lc g" style="left:729.58px;top:867.30px">右</div><div class="l g" style="left:740.53px;top:867.30px">] 226 27 matches total</div>
<div class="l d" style="left:724.10px;top:878.20px">[</div><div class="lc d" style="left:729.58px;top:878.20px">右</div><div class="l d" style="left:740.53px;top:878.20px">] </div><div class="lc d" style="left:751.48px;top:878.20px">列表完成</div><div class="l d" style="left:795.28px;top:878.20px">: 2 KB </div><div class="lc d" style="left:833.60px;top:878.20px">于</div><div class="l d" style="left:844.55px;top:878.20px"> 0.18 </div><div class="lc d" style="left:877.40px;top:878.20px">秒</div><div class="l d" style="left:888.35px;top:878.20px"> (2.9 KB/</div><div class="lc d" style="left:937.63px;top:878.20px">秒</div><div class="l d" style="left:948.58px;top:878.20px">)</div>
<div class="l k" style="left:724.10px;top:889.10px">[</div><div class="lc k" style="left:729.58px;top:889.10px">右</div><div class="l k" style="left:740.53px;top:889.10px">] CWD mb</div>
<div class="l g" style="left:724.10px;top:900.00px">[</div><div class="lc g" style="left:729.58px;top:900.00px">右</div><div class="l g" style="left:740.53px;top:900.00px">] 250 OK. Current directory is /domains/svip88888.com/public_html/mb</div>
<div style="left:1404.6px;top:722px;width:14px;height:189.5px;background:#f0f0f0"></div>
<div style="left:1404.8px;top:880.6px;width:13.7px;height:15.6px;background:#cdcdcd"></div>
<svg class="i" style="left:1406.3px;top:728.6px" width="10" height="7"><path d="M1 5.4 L5 1.4 L9 5.4" fill="none" stroke="#555" stroke-width="1.5"/></svg>
<svg class="i" style="left:1406.3px;top:900.8px" width="10" height="7"><path d="M1 1.2 L5 5.2 L9 1.2" fill="none" stroke="#444" stroke-width="1.6"/></svg>
<div style="left:20px;top:911.4px;width:1399px;height:20.2px;background:#f0f0f0;border-top:1px solid #dcdcdc"></div>
<svg class="i" style="left:724px;top:914.8px" width="13.5" height="13.8" ><use href="#lock"/></svg>
<svg class="i" style="left:739.4px;top:916.2px" width="14.2" height="12.4" ><use href="#sb2"/></svg>
<svg class="i" style="left:756.2px;top:914.3px" width="14.4" height="14.4" ><use href="#sb3"/></svg>
<div class="h" style="left:773.2px;top:915.7px;font-size:10.85px;font-weight:500">正在请求当前目录</div>
<svg class="i" style="left:1407px;top:921px" width="10" height="10"><g fill="#b8b8b8"><rect x="7" y="1" width="1.6" height="1.6"/><rect x="4" y="4" width="1.6" height="1.6"/><rect x="7" y="4" width="1.6" height="1.6"/><rect x="1" y="7" width="1.6" height="1.6"/><rect x="4" y="7" width="1.6" height="1.6"/><rect x="7" y="7" width="1.6" height="1.6"/></g></svg>
<div class="t" style="left:1352px;top:941px;font-size:17.2px;font-weight:bold;color:#e5001f;line-height:22px;height:22px">中赚网</div>
<div class="t" style="left:1331px;top:957.2px;font-size:12.4px;font-weight:bold;color:#1a05e8;letter-spacing:-.05px;line-height:16px">www.you85.com</div>
</body></html>
